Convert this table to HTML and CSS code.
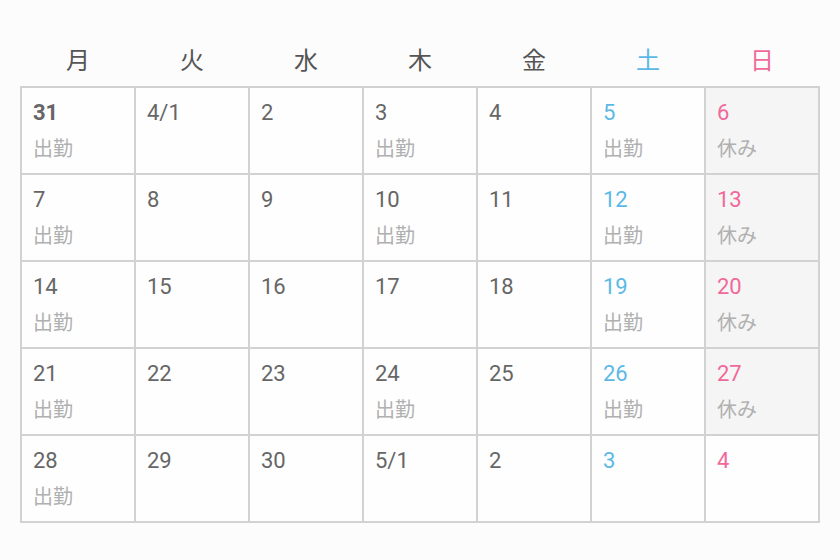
FILE: index.html
```html
<!DOCTYPE html>
<html lang="ja">
<head>
<meta charset="utf-8">
<title>カレンダー</title>
<link rel="stylesheet" href="styles.css">
</head>
<body>
<div class="calendar">
  <div class="weekdays">
    <div class="wd">月</div>
    <div class="wd">火</div>
    <div class="wd">水</div>
    <div class="wd">木</div>
    <div class="wd">金</div>
    <div class="wd sat">土</div>
    <div class="wd sun">日</div>
  </div>
  <div class="grid">
    <div class="cell"><div class="num today">31</div><div class="label">出勤</div></div>
    <div class="cell"><div class="num">4/1</div></div>
    <div class="cell"><div class="num">2</div></div>
    <div class="cell"><div class="num">3</div><div class="label">出勤</div></div>
    <div class="cell"><div class="num">4</div></div>
    <div class="cell"><div class="num sat">5</div><div class="label">出勤</div></div>
    <div class="cell off"><div class="num sun">6</div><div class="label">休み</div></div>

    <div class="cell"><div class="num">7</div><div class="label">出勤</div></div>
    <div class="cell"><div class="num">8</div></div>
    <div class="cell"><div class="num">9</div></div>
    <div class="cell"><div class="num">10</div><div class="label">出勤</div></div>
    <div class="cell"><div class="num">11</div></div>
    <div class="cell"><div class="num sat">12</div><div class="label">出勤</div></div>
    <div class="cell off"><div class="num sun">13</div><div class="label">休み</div></div>

    <div class="cell"><div class="num">14</div><div class="label">出勤</div></div>
    <div class="cell"><div class="num">15</div></div>
    <div class="cell"><div class="num">16</div></div>
    <div class="cell"><div class="num">17</div></div>
    <div class="cell"><div class="num">18</div></div>
    <div class="cell"><div class="num sat">19</div><div class="label">出勤</div></div>
    <div class="cell off"><div class="num sun">20</div><div class="label">休み</div></div>

    <div class="cell"><div class="num">21</div><div class="label">出勤</div></div>
    <div class="cell"><div class="num">22</div></div>
    <div class="cell"><div class="num">23</div></div>
    <div class="cell"><div class="num">24</div><div class="label">出勤</div></div>
    <div class="cell"><div class="num">25</div></div>
    <div class="cell"><div class="num sat">26</div><div class="label">出勤</div></div>
    <div class="cell off"><div class="num sun">27</div><div class="label">休み</div></div>

    <div class="cell"><div class="num">28</div><div class="label">出勤</div></div>
    <div class="cell"><div class="num">29</div></div>
    <div class="cell"><div class="num">30</div></div>
    <div class="cell"><div class="num">5/1</div></div>
    <div class="cell"><div class="num">2</div></div>
    <div class="cell"><div class="num sat">3</div></div>
    <div class="cell"><div class="num sun">4</div></div>
  </div>
</div>
</body>
</html>
```
FILE: styles.css
```css
html, body {
  margin: 0;
  padding: 0;
  background: #fcfcfc;
}
body {
  font-family: Roboto, "Noto Sans CJK JP", sans-serif;
  color: #666;
}
.calendar {
  width: 800px;
  padding: 43px 0 0 20px;
}
.weekdays {
  display: grid;
  grid-template-columns: repeat(7, 112px);
  column-gap: 2px;
  padding: 0 2px;
  height: 43px;
}
.wd {
  font-family: "Noto Sans CJK JP", sans-serif;
  font-size: 24px;
  line-height: 32px;
  text-align: center;
  color: #555;
}
.grid {
  display: grid;
  grid-template-columns: repeat(7, 112px);
  grid-auto-rows: 85px;
  gap: 2px;
  padding: 2px;
  background: #d2d2d2;
}
.cell {
  background: #fefefe;
  padding: 12px 10px 0 11px;
}
.cell.off {
  background: #f5f5f5;
}
.num {
  font-size: 22px;
  line-height: 26px;
  color: #666;
}
.num.today {
  font-weight: 700;
}
.label {
  margin-top: 8px;
  font-family: "Noto Sans CJK JP", sans-serif;
  font-size: 20px;
  line-height: 28px;
  color: #b0b0b0;
}
.sat {
  color: #5cb9e6;
}
.sun {
  color: #f0699a;
}
.num.sat { color: #5cb9e6; }
.num.sun { color: #f0699a; }
```
